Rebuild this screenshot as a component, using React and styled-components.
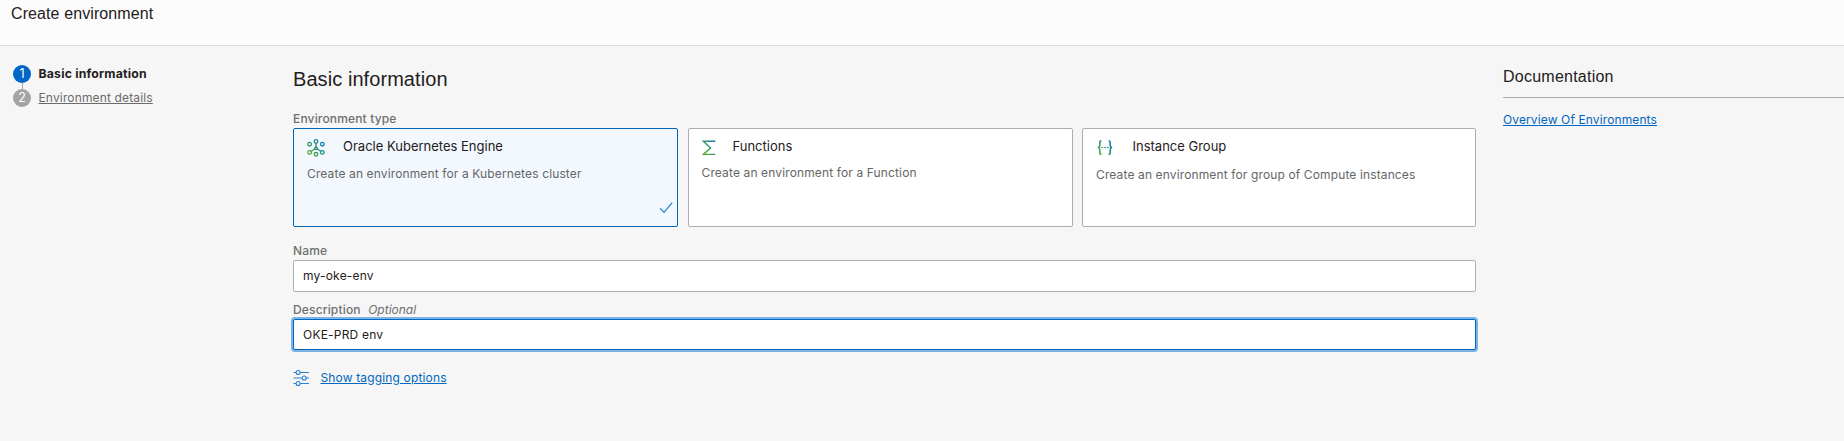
import React from "react";
import styled, { createGlobalStyle, css } from "styled-components";

const GlobalStyle = createGlobalStyle`
  * { box-sizing: border-box; }
  body {
    margin: 0;
    background: #f6f6f6;
    color: #1f2020;
    font-family: Inter, "Liberation Sans", sans-serif;
    font-size: 12px;
    overflow: hidden;
  }
`;

const heading = css`
  margin: 0;
  font-family: "Liberation Sans", Arial, sans-serif;
  font-weight: 400;
`;

const Page = styled.div`
  height: 441px;
`;

const Header = styled.header`
  height: 46px;
  padding: 4px 11px 0;
  background: #fcfcfc;
  border-bottom: 1px solid #dedede;
`;

const PageTitle = styled.h1`
  ${heading}
  font-size: 16px;
  line-height: 20px;
  letter-spacing: ${(p) => p.$spacing || "0.1px"};
`;

const Columns = styled.div`
  display: grid;
  grid-template-columns: 253px 1183px 341px;
  column-gap: 27px;
  padding-left: 13px;
`;

const Steps = styled.ol`
  list-style: none;
  margin: 0;
  padding: 19px 0 0;
`;

const Step = styled.li`
  display: flex;
  align-items: center;
  gap: 7.5px;
  height: 18px;

  & + & {
    margin-top: 6px;
  }
`;

const StepBadge = styled.span`
  position: relative;
  width: 18px;
  height: 18px;
  border-radius: 50%;
  background: ${(p) => (p.$active ? "#0066c7" : "#a3a3a3")};
  color: #fff;
  font-size: 12.5px;
  line-height: 18px;
  text-align: center;

  &::after {
    content: "";
    display: ${(p) => (p.$linked ? "block" : "none")};
    position: absolute;
    left: 9px;
    top: 18px;
    width: 1px;
    height: 6px;
    background: #a9a9a9;
  }
`;

const StepLabel = styled.span`
  line-height: 18px;
  letter-spacing: ${(p) => (p.$active ? "0.2px" : "0.15px")};
  font-size: ${(p) => (p.$active ? "12.25px" : "12px")};
  font-weight: ${(p) => (p.$active ? 700 : 400)};
  color: ${(p) => (p.$active ? "#1f2020" : "#6b6b6b")};
  text-decoration: ${(p) => (p.$active ? "none" : "underline")};
`;

const Form = styled.main`
  padding-top: 21px;
`;

const SectionTitle = styled.h2`
  ${heading}
  font-size: 20px;
  line-height: 24px;
  letter-spacing: 0.07px;
`;

const Label = styled.label`
  display: block;
  height: 16px;
  margin-top: ${(p) => p.$top}px;
  line-height: 14px;
  font-weight: 500;
  letter-spacing: 0.16px;
  color: #6f6f6f;
`;

const Optional = styled.em`
  margin-left: 7.5px;
  font-weight: 400;
  letter-spacing: 0;
`;

const Cards = styled.div`
  display: grid;
  grid-template-columns: 385px 385px 394px;
  justify-content: space-between;
  height: 99px;
`;

const Card = styled.section`
  display: flex;
  flex-direction: column;
  padding: 9px 4px 6px 13px;
  border: 1px solid ${(p) => (p.$selected ? "#0066b8" : "#a9aeb5")};
  border-radius: 2px;
  background: ${(p) => (p.$selected ? "#f2f8fd" : "#fff")};
`;

const CardHead = styled.div`
  display: flex;
  align-items: flex-start;
  height: 20px;
  gap: ${(p) => p.$gap}px;
`;

const CardTitle = styled.h3`
  margin: 0;
  font-size: 13px;
  font-weight: 400;
  line-height: 16px;
`;

const CardText = styled.p`
  margin: ${(p) => p.$top}px 0 0;
  line-height: 16px;
  letter-spacing: 0.13px;
  color: #666;
`;

const CheckSlot = styled.div`
  display: flex;
  justify-content: flex-end;
  margin-top: auto;
  height: 18px;
`;

const TextInput = styled.input`
  display: block;
  width: 100%;
  height: 32px;
  padding: 0 9px 2px;
  border: 1px solid #aab0b8;
  border-radius: 2px;
  background: #fff;
  color: #1f2020;
  font: inherit;
  letter-spacing: 0.2px;
  outline: none;

  ${(p) =>
    p.$focused &&
    css`
      height: 31px;
      padding-bottom: 1px;
      border-color: #0067c5;
      box-shadow: 0 0 0 2px #7db2e2;
    `}
`;

const Tagging = styled.div`
  display: flex;
  align-items: center;
  gap: 10.5px;
  margin-top: 18px;
  height: 20px;
`;

const Link = styled.a`
  color: #0067c0;
  line-height: 18px;
  letter-spacing: ${(p) => p.$spacing || "0.12px"};
  text-decoration: underline;
  cursor: pointer;
`;

const Docs = styled.aside`
  padding-top: 21px;
`;

const DocsHead = styled.div`
  height: 31px;
  margin-bottom: 13px;
  border-bottom: 1px solid #a9adb8;
`;

const Icon = styled.svg`
  display: block;
  flex: none;
`;

const CardIcon = styled(Icon)`
  margin-top: -1px;
`;

const Gradient = ({ id }) => (
  <defs>
    <linearGradient id={id} gradientUnits="userSpaceOnUse" x1="1" y1="17" x2="17" y2="3">
      <stop offset="0" stopColor="#5fae2e" />
      <stop offset="0.5" stopColor="#2b9177" />
      <stop offset="1" stopColor="#0572ce" />
    </linearGradient>
  </defs>
);

const ClusterIcon = () => (
  <CardIcon width="18" height="20" viewBox="0 0 18 20" fill="none" stroke="url(#gCluster)" strokeWidth="1.3">
    <Gradient id="gCluster" />
    <circle cx="9" cy="4.5" r="1.8" />
    <circle cx="2.6" cy="7.2" r="1.8" />
    <circle cx="15.3" cy="7.2" r="1.8" />
    <circle cx="2.6" cy="15.4" r="1.8" />
    <circle cx="15.3" cy="15.4" r="1.8" />
    <circle cx="9" cy="17.3" r="1.8" />
    <path d="M9 6.4V9.4M7.3 12.3 4.1 14.2M10.7 12.3 13.8 14.2M9 9.2l1.9 3.2H7.1z" />
  </CardIcon>
);

const SigmaIcon = () => (
  <CardIcon width="14" height="20" viewBox="0 0 14 20" fill="none" stroke="url(#gSigma)" strokeWidth="1.4">
    <Gradient id="gSigma" />
    <path d="M13.3 4.3H1.3L8.6 10.9 1.3 17.4H13.3" />
  </CardIcon>
);

const BracesIcon = () => (
  <CardIcon width="18" height="20" viewBox="0 0 18 20" fill="none" stroke="url(#gBraces)" strokeWidth="1.6">
    <Gradient id="gBraces" />
    <path d="M5.4 3.8C4 3.8 3.8 4.3 3.8 5.5V8.5C3.8 9.8 3.2 10.3 2 10.5 3.2 10.7 3.8 11.3 3.8 12.6V15.6C3.8 16.8 4 17.4 5.4 17.4" />
    <path d="M12.6 3.8C14 3.8 14.2 4.3 14.2 5.5V8.5C14.2 9.8 14.8 10.3 16 10.5 14.8 10.7 14.2 11.3 14.2 12.6V15.6C14.2 16.8 14 17.4 12.6 17.4" />
    <path d="M5.2 10.5h1.8M8.1 10.5h1.8M11 10.5h1.8" strokeWidth="1" />
  </CardIcon>
);

const CheckIcon = () => (
  <Icon width="14" height="14" viewBox="0 0 14 14" fill="none" stroke="#1c7fd2" strokeWidth="1.2">
    <path d="M1 6.4 5 10.4 13.2 .6" />
  </Icon>
);

const SlidersIcon = () => (
  <Icon width="17" height="18" viewBox="0 0 17 18" fill="none" stroke="#2b80cf" strokeWidth="1.1">
    <path d="M.5 3.5H3M7.2 3.5H16M.5 9H9M13.2 9H16M.5 14.5H3M7.2 14.5H16" />
    <circle cx="5.1" cy="3.5" r="2" />
    <circle cx="11.2" cy="9" r="2" />
    <circle cx="5.1" cy="14.5" r="2" />
  </Icon>
);

export default function App() {
  return (
    <Page>
      <GlobalStyle />
      <Header>
        <PageTitle>Create environment</PageTitle>
      </Header>
      <Columns>
        <Steps>
          <Step>
            <StepBadge $active $linked>1</StepBadge>
            <StepLabel $active>Basic information</StepLabel>
          </Step>
          <Step>
            <StepBadge>2</StepBadge>
            <StepLabel>Environment details</StepLabel>
          </Step>
        </Steps>
        <Form>
          <SectionTitle>Basic information</SectionTitle>
          <Label as="div" $top={21}>Environment type</Label>
          <Cards>
            <Card $selected>
              <CardHead $gap={18}>
                <ClusterIcon />
                <CardTitle>Oracle Kubernetes Engine</CardTitle>
              </CardHead>
              <CardText $top={8}>Create an environment for a Kubernetes cluster</CardText>
              <CheckSlot>
                <CheckIcon />
              </CheckSlot>
            </Card>
            <Card>
              <CardHead $gap={17}>
                <SigmaIcon />
                <CardTitle>Functions</CardTitle>
              </CardHead>
              <CardText $top={7}>Create an environment for a Function</CardText>
            </Card>
            <Card>
              <CardHead $gap={18.5}>
                <BracesIcon />
                <CardTitle>Instance Group</CardTitle>
              </CardHead>
              <CardText $top={9}>Create an environment for group of Compute instances</CardText>
            </Card>
          </Cards>
          <Label htmlFor="name" $top={17}>Name</Label>
          <TextInput id="name" defaultValue="my-oke-env" />
          <Label htmlFor="description" $top={11}>
            Description<Optional>Optional</Optional>
          </Label>
          <TextInput id="description" defaultValue="OKE-PRD env" $focused />
          <Tagging>
            <SlidersIcon />
            <Link $spacing="0.15px">Show tagging options</Link>
          </Tagging>
        </Form>
        <Docs>
          <DocsHead>
            <PageTitle as="h2" $spacing="0.24px">Documentation</PageTitle>
          </DocsHead>
          <Link>Overview Of Environments</Link>
        </Docs>
      </Columns>
    </Page>
  );
}
